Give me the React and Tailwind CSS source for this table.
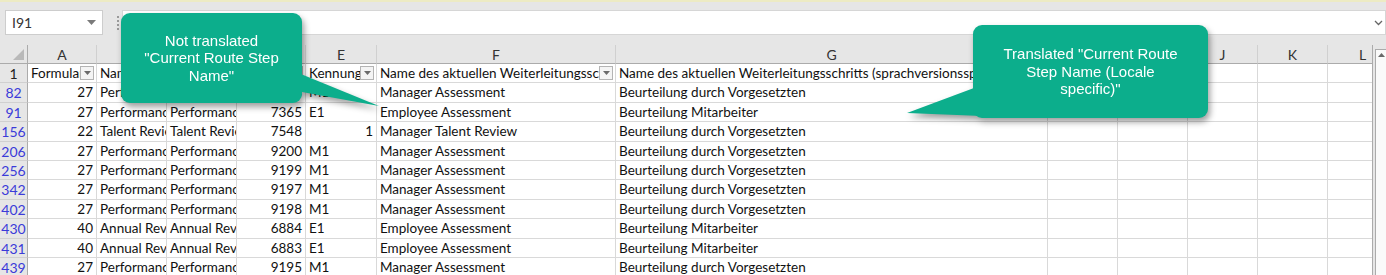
const COLS = ["A", "B", "C", "D", "E", "F", "G", "H", "I", "J", "K", "L"];

const HEADERS = [
  "Formular",
  "Name des Formulars",
  "Name der Vorlage",
  "Formular-ID",
  "Kennung",
  "Name des aktuellen Weiterleitungsschritts",
  "Name des aktuellen Weiterleitungsschritts (sprachversionsspezifisch)",
];

const ROWS = [
  { n: "82", a: "27", b: "Performance Review", c: "Performance Review", d: "9196", e: "M1", f: "Manager Assessment", g: "Beurteilung durch Vorgesetzten" },
  { n: "91", a: "27", b: "Performance Review", c: "Performance Review", d: "7365", e: "E1", f: "Employee Assessment", g: "Beurteilung Mitarbeiter" },
  { n: "156", a: "22", b: "Talent Review", c: "Talent Review", d: "7548", e: "1", eNum: true, f: "Manager Talent Review", g: "Beurteilung durch Vorgesetzten" },
  { n: "206", a: "27", b: "Performance Review", c: "Performance Review", d: "9200", e: "M1", f: "Manager Assessment", g: "Beurteilung durch Vorgesetzten" },
  { n: "256", a: "27", b: "Performance Review", c: "Performance Review", d: "9199", e: "M1", f: "Manager Assessment", g: "Beurteilung durch Vorgesetzten" },
  { n: "342", a: "27", b: "Performance Review", c: "Performance Review", d: "9197", e: "M1", f: "Manager Assessment", g: "Beurteilung durch Vorgesetzten" },
  { n: "402", a: "27", b: "Performance Review", c: "Performance Review", d: "9198", e: "M1", f: "Manager Assessment", g: "Beurteilung durch Vorgesetzten" },
  { n: "430", a: "40", b: "Annual Review", c: "Annual Review", d: "6884", e: "E1", f: "Employee Assessment", g: "Beurteilung Mitarbeiter" },
  { n: "431", a: "40", b: "Annual Review", c: "Annual Review", d: "6883", e: "E1", f: "Employee Assessment", g: "Beurteilung Mitarbeiter" },
  { n: "439", a: "27", b: "Performance Review", c: "Performance Review", d: "9195", e: "M1", f: "Manager Assessment", g: "Beurteilung durch Vorgesetzten" },
];

function FormulaBar() {
  return (
    <div className="h-[45px] border-t-2 border-[#edebc4]">
      <div className="flex items-center pt-[8px]">
        <div className="ml-[5px] flex h-[25px] w-[98px] items-center justify-between border border-[#cdcdcd] bg-white pl-[6px] pr-[6px] text-[14px] text-[#333]">
          <span>I91</span>
          <svg width="9" height="5" viewBox="0 0 9 5">
            <path d="M0 0h9L4.5 5z" fill="#7a7a7a" />
          </svg>
        </div>
        <div className="ml-[14px] flex flex-col gap-[2px]">
          <span className="h-[2px] w-[2px] bg-[#9a9a9a]" />
          <span className="h-[2px] w-[2px] bg-[#9a9a9a]" />
          <span className="h-[2px] w-[2px] bg-[#9a9a9a]" />
          <span className="h-[2px] w-[2px] bg-[#9a9a9a]" />
        </div>
        <div className="ml-[3px] flex h-[25px] flex-1 items-center justify-end border border-[#d6d6d6] bg-white pr-[2px]">
          <svg width="9" height="6" viewBox="0 0 9 6">
            <path d="M1 1l3.5 3.5L8 1" fill="none" stroke="#666" strokeWidth="1.3" />
          </svg>
        </div>
      </div>
    </div>
  );
}

function FilterButton() {
  return (
    <span className="mr-[2px] flex h-[14px] w-[14px] shrink-0 items-center justify-center border border-[#b4b4b4] bg-[#f4f4f4]">
      <svg width="7" height="4" viewBox="0 0 7 4">
        <path d="M0 0h7L3.5 4z" fill="#6a6a6a" />
      </svg>
    </span>
  );
}

function Cell({ children, right }) {
  return (
    <div
      className={
        "overflow-hidden whitespace-nowrap border-b border-r border-[#d9d9d9] bg-white px-[3px] leading-[19px] text-[#111] " +
        (right ? "text-right" : "")
      }
    >
      {children}
    </div>
  );
}

function Sheet() {
  return (
    <div className="grid h-[230px] w-[1373px] grid-cols-[28px_69px_70px_70px_69px_71px_239px_432px_70px_70px_70px_70px_70px] grid-rows-[19px_repeat(11,19.4px)] overflow-hidden border-r border-[#ababab] text-[13.5px]">
      <div className="flex items-end justify-end border-b border-r border-[#ababab] bg-[#e6e6e6] pb-[3px] pr-[3px]">
        <svg width="11" height="11" viewBox="0 0 11 11">
          <path d="M11 0v11H0z" fill="#b9b9b9" />
        </svg>
      </div>
      {COLS.map((c) => (
        <div
          key={c}
          className="border-b border-r border-b-[#ababab] border-r-[#d0d0d0] bg-[#e6e6e6] text-center text-[14px] leading-[19px] text-[#333]"
        >
          {c}
        </div>
      ))}

      <div className="border-b border-r border-b-[#d0d0d0] border-r-[#ababab] bg-[#e6e6e6] text-center text-[14px] leading-[19px] text-[#222]">
        1
      </div>
      {HEADERS.map((h) => (
        <div
          key={h}
          className="flex items-center overflow-hidden whitespace-nowrap border-b border-r border-[#d9d9d9] bg-white pl-[3px] text-[#111]"
        >
          <span className="flex-1 overflow-hidden">{h}</span>
          <FilterButton />
        </div>
      ))}
      {["h", "i", "j", "k", "l"].map((k) => (
        <Cell key={k} />
      ))}

      {ROWS.map((r) => (
        <div key={r.n} className="contents">
          <div className="border-b border-r border-b-[#d0d0d0] border-r-[#ababab] bg-[#e6e6e6] text-center text-[14px] leading-[19px] text-[#3b3bd9]">
            {r.n}
          </div>
          <Cell right>{r.a}</Cell>
          <Cell>{r.b}</Cell>
          <Cell>{r.c}</Cell>
          <Cell right>{r.d}</Cell>
          <Cell right={r.eNum}>{r.e}</Cell>
          <Cell>{r.f}</Cell>
          <Cell>{r.g}</Cell>
          <Cell />
          <Cell />
          <Cell />
          <Cell />
          <Cell />
        </div>
      ))}
    </div>
  );
}

function ScrollBar() {
  return (
    <div className="w-[13px] bg-[#e6e6e6] pl-[2px] pt-[4px]">
      <div className="flex h-full flex-col items-center border-l border-t border-[#ababab] bg-[#fafafa] pt-[3px]">
        <svg width="7" height="4" viewBox="0 0 7 4">
          <path d="M0 4h7L3.5 0z" fill="#6a6a6a" />
        </svg>
      </div>
    </div>
  );
}

function Callout({ className, boxClass, tail, w, h, children }) {
  return (
    <div className={"absolute drop-shadow-[2px_4px_3px_rgba(0,0,0,0.38)] " + className}>
      <svg className="absolute left-0 top-0" width={w} height={h} viewBox={`0 0 ${w} ${h}`}>
        <polygon points={tail} fill="#0cae8c" />
      </svg>
      <div
        className={
          "absolute flex items-center justify-center rounded-[9px] bg-[#0cae8c] text-center font-['Liberation_Sans',Arial,sans-serif] text-[15px] leading-[17.5px] text-white " +
          boxClass
        }
      >
        <p>{children}</p>
      </div>
    </div>
  );
}

export default function App() {
  return (
    <div className="relative h-[275px] w-[1386px] overflow-hidden bg-[#e6e6e6] font-['Lato',sans-serif]">
      <FormulaBar />
      <div className="flex">
        <Sheet />
        <ScrollBar />
      </div>

      <Callout
        className="left-[121px] top-[13px] h-[95px] w-[260px]"
        boxClass="left-0 top-0 h-[90px] w-[181px]"
        tail="170,57 258,93 170,77"
        w={260}
        h={95}
      >
        Not translated
        <br />
        "Current Route Step
        <br />
        Name"
      </Callout>

      <Callout
        className="left-[906px] top-[25px] h-[94px] w-[302px]"
        boxClass="left-[67px] top-0 h-[93px] w-[235px]"
        tail="1,88 76,60 76,91"
        w={302}
        h={94}
      >
        Translated "Current Route
        <br />
        Step Name (Locale
        <br />
        specific)"
      </Callout>
    </div>
  );
}
